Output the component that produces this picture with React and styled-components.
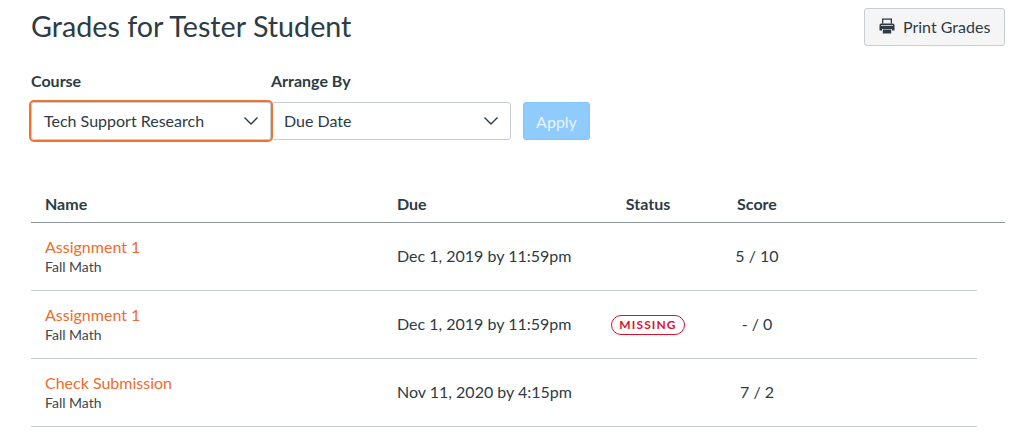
import styled, { createGlobalStyle } from 'styled-components';

const Global = createGlobalStyle`
    html, body {
        margin: 0;
        padding: 0;
        background: #fff;
        overflow: hidden;
    }
    body {
        font-family: Lato, "Open Sans", sans-serif;
        color: #2d3b45;
    }
`

const Page = styled.div`
    width: 1026px;
    height: 441px;
    box-sizing: border-box;
    padding: 8px 21px 0 31px;
`

const Header = styled.div`
    display: flex;
    justify-content: space-between;
    align-items: flex-start;
    height: 64px;
`

const Title = styled.h1`
    margin: 0;
    font-size: 28.7px;
    font-weight: 400;
    line-height: 37px;
`

const PrintButton = styled.button`
    display: flex;
    align-items: center;
    gap: 8px;
    width: 141px;
    height: 38px;
    box-sizing: border-box;
    padding: 0 0 2px 14px;
    border: 1px solid #c7cdd1;
    border-radius: 3px;
    background: #f5f5f5;
    color: #2d3b45;
    font-family: inherit;
    font-size: 16px;
`

const Filters = styled.div`
    display: flex;
    align-items: flex-end;
    height: 68px;
`

const Field = styled.div`
    display: flex;
    flex-direction: column;
    width: ${(p) => p.$width}px;
`

const Label = styled.div`
    font-size: 16px;
    font-weight: 700;
    line-height: 20px;
    margin-bottom: 11px;
`

const Select = styled.div`
    display: flex;
    align-items: center;
    justify-content: space-between;
    position: relative;
    z-index: ${(p) => (p.$focused ? 1 : 0)};
    height: 38px;
    box-sizing: border-box;
    padding: 0 11px 2px 12px;
    border: 1px solid #c7cdd1;
    border-radius: 3px;
    background: #fff;
    font-size: 16px;
    outline: ${(p) => (p.$focused ? '2px solid #ee7430' : 'none')};
    outline-offset: 0;
    svg {
        margin-top: 2px;
    }
`

const ApplyButton = styled.button`
    width: 67px;
    height: 38px;
    margin-left: 12px;
    padding: 0;
    border: 1px solid #82c5fb;
    border-radius: 3px;
    background: #90cbfd;
    color: #e8f4fe;
    font-family: inherit;
    font-size: 16px;
`

const Table = styled.div`
    margin-top: 44px;
`

const Columns = styled.div`
    display: grid;
    grid-template-columns: 352px 214px 74px 144px;
    column-gap: 0;
    align-items: center;
    width: ${(p) => (p.$head ? 974 : 946)}px;
    box-sizing: border-box;
    padding-left: 14px;
`

const HeadRow = styled(Columns)`
    height: 39px;
    border-bottom: 1px solid #8b969e;
    font-size: 16px;
    font-weight: 700;
`

const Row = styled(Columns)`
    height: 68px;
    border-bottom: 1px solid #c7cdd1;
    font-size: 16px;
    padding-bottom: 2px;
`

const Center = styled.div`
    justify-self: ${(p) => (p.$score ? 'start' : 'center')};
    white-space: nowrap;
    width: ${(p) => (p.$score ? '92px' : 'auto')};
    margin-left: ${(p) => (p.$score ? '26px' : '0')};
    text-align: center;
`

const NameCell = styled.div`
    padding-top: 2px;
`

const Name = styled.a`
    display: block;
    color: #ee6c2c;
    font-size: 16px;
    line-height: 20px;
`

const Context = styled.div`
    font-size: 14px;
    line-height: 18px;
    margin-top: 1px;
    color: #3d4850;
`

const Due = styled.div`
    font-size: 16px;
`

const Pill = styled.span`
    display: inline-block;
    box-sizing: border-box;
    width: 74px;
    height: 20px;
    margin-top: 2px;
    border: 1px solid #e0102e;
    border-radius: 10px;
    color: #e0102e;
    font-size: 12px;
    font-weight: 700;
    letter-spacing: 1.1px;
    line-height: 18px;
    text-align: center;
`

const Chevron = () => (
    <svg width="16" height="16" viewBox="0 0 16 16" fill="none" stroke="#2d3b45" strokeWidth="1.4">
        <path d="M1.5 4.5 L8 11 L14.5 4.5" />
    </svg>
)

const PrinterIcon = () => (
    <svg width="16" height="16" viewBox="0 0 16 16" fill="#2d3b45">
        <path d="M3 0.5h10v5h-1.3V1.8H4.3V5.5H3z" />
        <path fillRule="evenodd" d="M2.2 5.5h11.6A1.7 1.7 0 0 1 15.5 7.2V12.5H13V11H3v1.5H.5V7.2A1.7 1.7 0 0 1 2.2 5.5zM2 7.2v.9h12v-.9z" />
        <path d="M3.8 11.5h8.4V15.5H3.8z" />
    </svg>
)

const grades = [
    { name: 'Assignment 1', due: 'Dec 1, 2019 by 11:59pm', score: '5 / 10' },
    { name: 'Assignment 1', due: 'Dec 1, 2019 by 11:59pm', missing: true, score: '- / 0' },
    { name: 'Check Submission', due: 'Nov 11, 2020 by 4:15pm', score: '7 / 2' },
]

const App = () => {
    return (
        <>
            <Global />
            <Page>
                <Header>
                    <Title>Grades for Tester Student</Title>
                    <PrintButton><PrinterIcon />Print Grades</PrintButton>
                </Header>
                <Filters>
                    <Field $width={240}>
                        <Label>Course</Label>
                        <Select $focused>Tech Support Research<Chevron /></Select>
                    </Field>
                    <Field $width={240}>
                        <Label>Arrange By</Label>
                        <Select>Due Date<Chevron /></Select>
                    </Field>
                    <ApplyButton>Apply</ApplyButton>
                </Filters>
                <Table>
                    <HeadRow $head>
                        <div>Name</div>
                        <div>Due</div>
                        <Center>Status</Center>
                        <Center $score>Score</Center>
                    </HeadRow>
                    {grades.map((g, i) => (
                        <Row key={i}>
                            <NameCell>
                                <Name>{g.name}</Name>
                                <Context>Fall Math</Context>
                            </NameCell>
                            <Due>{g.due}</Due>
                            <Center>{g.missing && <Pill>MISSING</Pill>}</Center>
                            <Center $score>{g.score}</Center>
                        </Row>
                    ))}
                </Table>
            </Page>
        </>
    )
}

export default App;
